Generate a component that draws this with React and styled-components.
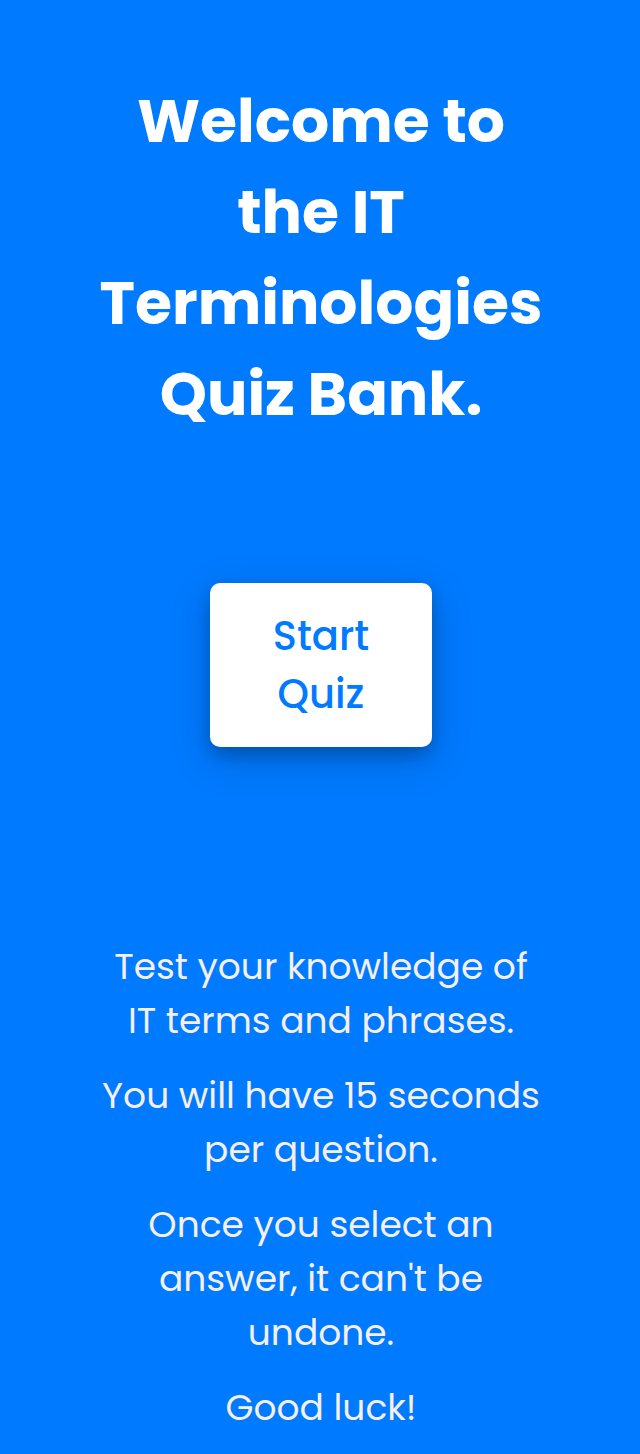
import React from "react";
import styled, { createGlobalStyle } from "styled-components";

const GlobalStyle = createGlobalStyle`
  * {
    box-sizing: border-box;
    margin: 0;
    padding: 0;
  }
  body {
    background: #007aff;
    font-family: Poppins, Inter, "Open Sans", "Liberation Sans", sans-serif;
  }
`;

const Page = styled.main`
  display: flex;
  flex-direction: column;
  align-items: center;
  padding: 76px 80px 18px 82px;
  text-align: center;
`;

const Title = styled.h1`
  max-width: 480px;
  color: #fff;
  font-size: 60px;
  font-weight: 700;
  line-height: 91px;
`;

const StartButton = styled.button`
  width: 222px;
  margin: 143px 0 193px;
  padding: 24px 40px;
  border: 0;
  border-radius: 10px;
  background: #fff;
  box-shadow: 0 8px 16px rgba(0, 0, 0, 0.2), 0 12px 40px rgba(0, 0, 0, 0.19);
  color: #007aff;
  font: inherit;
  font-size: 40px;
  font-weight: 500;
  line-height: 58px;
  cursor: pointer;
`;

const Rules = styled.section`
  display: flex;
  flex-direction: column;
  gap: 21px;
`;

const Rule = styled.p`
  max-width: 480px;
  color: #f5eff0;
  font-size: 36px;
  line-height: 54px;
`;

const rules = [
  ["Test your knowledge of", "IT terms and phrases."],
  ["You will have 15 seconds", "per question."],
  ["Once you select an", "answer, it can't be", "undone."],
  ["Good luck!"],
];

function Lines({ items }) {
  return items.map((line, i) => (
    <React.Fragment key={line}>
      {i > 0 && <br />}
      {line}
    </React.Fragment>
  ));
}

export default function App() {
  return (
    <>
      <GlobalStyle />
      <Page>
        <Title>
          <Lines items={["Welcome to", "the IT", "Terminologies", "Quiz Bank."]} />
        </Title>
        <StartButton type="button">
          <Lines items={["Start", "Quiz"]} />
        </StartButton>
        <Rules>
          {rules.map((lines) => (
            <Rule key={lines[0]}>
              <Lines items={lines} />
            </Rule>
          ))}
        </Rules>
      </Page>
    </>
  );
}
